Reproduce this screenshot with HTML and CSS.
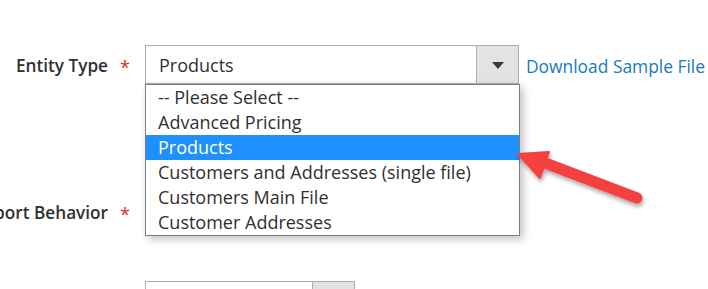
FILE: index.html
```html
<!DOCTYPE html>
<html lang="en">
<head>
  <meta charset="UTF-8" />
  <title>Import Settings</title>
  <link rel="stylesheet" href="styles.css">
</head>
<body>
  <form class="import-form">
    <div class="field field-entity">
      <label class="field-label">Entity Type</label>
      <span class="required">*</span>
      <div class="control">
        <div class="select">
          <span class="select-value">Products</span>
          <span class="select-button"><span class="caret"></span></span>
        </div>
        <ul class="options">
          <li>-- Please Select --</li>
          <li>Advanced Pricing</li>
          <li class="selected">Products</li>
          <li>Customers and Addresses (single file)</li>
          <li>Customers Main File</li>
          <li>Customer Addresses</li>
        </ul>
      </div>
      <a class="sample-link" href="#">Download Sample File</a>
    </div>

    <div class="field field-behavior">
      <label class="field-label">Import Behavior</label>
      <span class="required">*</span>
      <div class="control">
        <div class="select select-short">
          <span class="select-value"></span>
          <span class="select-button"><span class="caret"></span></span>
        </div>
      </div>
    </div>

    <div class="field field-next">
      <label class="field-label"></label>
      <span class="required hidden">*</span>
      <div class="control">
        <div class="select select-short">
          <span class="select-value"></span>
          <span class="select-button"></span>
        </div>
      </div>
    </div>

    <svg class="pointer" width="160" height="80" viewBox="0 0 160 80">
      <defs>
        <filter id="drop" x="-20%" y="-30%" width="140%" height="170%">
          <feDropShadow dx="1" dy="3" stdDeviation="2" flood-color="#000" flood-opacity="0.35" />
        </filter>
      </defs>
      <g filter="url(#drop)" fill="#f53f3f" stroke="#f53f3f">
        <line x1="30" y1="18" x2="122" y2="53" stroke-width="11" stroke-linecap="round" />
        <polygon points="3,9 34,7 25,33" stroke-width="2" stroke-linejoin="round" />
      </g>
    </svg>
  </form>
</body>
</html>
```

FILE: styles.css
```css
body {
  margin: 0;
  background: #fff;
  font-family: "Open Sans", Arial, sans-serif;
  color: #303030;
  overflow: hidden;
}
.import-form {
  position: relative;
  height: 289px;
  padding-top: 45px;
  box-sizing: border-box;
  overflow: hidden;
}
.field {
  display: flex;
  align-items: center;
  height: 39px;
}
.field-behavior {
  margin-top: 108px;
}
.field-next {
  margin-top: 50px;
}
.field-label {
  width: 108px;
  text-align: right;
  white-space: nowrap;
  direction: rtl;
  font-weight: 600;
  font-size: 17.2px;
  color: #303030;
  margin-top: 2px;
}
.required {
  width: 37px;
  padding-left: 12px;
  box-sizing: border-box;
  color: #e02b27;
  font-size: 18px;
  line-height: 1;
  margin-top: 4px;
}
.hidden {
  visibility: hidden;
}
.control {
  position: relative;
}
.select {
  display: flex;
  width: 374px;
  height: 39px;
  box-sizing: border-box;
  border: 1px solid #adadad;
  background: #fff;
}
.select-short {
  width: 210px;
}
.select-value {
  flex: 1;
  padding-left: 13px;
  font-size: 18px;
  line-height: 38px;
  color: #303030;
}
.select-button {
  width: 41px;
  border-left: 1px solid #adadad;
  background: #e3e3e3;
  display: flex;
  align-items: center;
  justify-content: center;
}
.caret {
  width: 0;
  height: 0;
  border-left: 6px solid transparent;
  border-right: 6px solid transparent;
  border-top: 7px solid #41362f;
  margin-top: 2px;
}
.options {
  position: absolute;
  top: 39px;
  left: 0;
  width: 375px;
  margin: 0;
  padding: 0;
  list-style: none;
  background: #fff;
  border: 1px solid #7f7f7f;
  box-sizing: border-box;
  box-shadow: 3px 3px 8px rgba(0, 0, 0, 0.25);
  z-index: 2;
}
.options li {
  height: 25px;
  line-height: 24px;
  padding-left: 12px;
  font-size: 18px;
  color: #303030;
  white-space: nowrap;
}
.options li.selected {
  background: #1e90ff;
  color: #fff;
}
.sample-link {
  margin-left: 7px;
  margin-top: 2px;
  font-size: 17.4px;
  color: #1979c3;
  text-decoration: none;
  white-space: nowrap;
}
.pointer {
  position: absolute;
  left: 515px;
  top: 145px;
  z-index: 3;
}
```
